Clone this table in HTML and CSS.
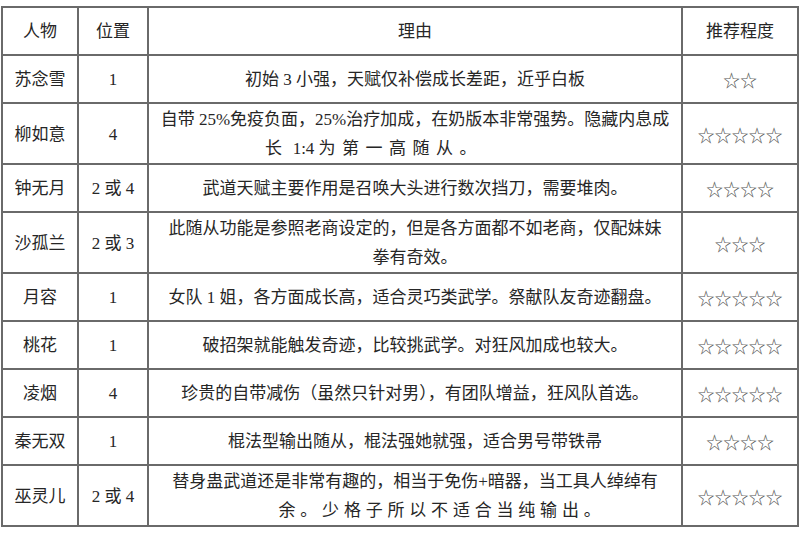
FILE: index.html
```html
<!DOCTYPE html>
<html lang="zh-CN">
<head>
<meta charset="utf-8">
<title>随从推荐</title>
<link rel="stylesheet" href="styles.css">
</head>
<body>
<table class="grid">
  <colgroup>
    <col class="c-name">
    <col class="c-pos">
    <col class="c-why">
    <col class="c-star">
  </colgroup>
  <thead>
    <tr class="row">
      <th>人物</th>
      <th>位置</th>
      <th>理由</th>
      <th>推荐程度</th>
    </tr>
  </thead>
  <tbody>
    <tr class="row">
      <td>苏念雪</td>
      <td>1</td>
      <td class="why">初始 3 小强，天赋仅补偿成长差距，近乎白板</td>
      <td class="stars">☆☆</td>
    </tr>
    <tr class="row">
      <td>柳如意</td>
      <td>4</td>
      <td class="why">自带 25%免疫负面，25%治疗加成，在奶版本非常强势。隐藏内息成<br><span class="spread spread-left">长<span class="plain"> 1:4 </span>为第一高随从。</span></td>
      <td class="stars">☆☆☆☆☆</td>
    </tr>
    <tr class="row">
      <td>钟无月</td>
      <td>2 或 4</td>
      <td class="why">武道天赋主要作用是召唤大头进行数次挡刀，需要堆肉。</td>
      <td class="stars">☆☆☆☆</td>
    </tr>
    <tr class="row">
      <td>沙孤兰</td>
      <td>2 或 3</td>
      <td class="why">此随从功能是参照老商设定的，但是各方面都不如老商，仅配妹妹<br>拳有奇效。</td>
      <td class="stars">☆☆☆</td>
    </tr>
    <tr class="row">
      <td>月容</td>
      <td>1</td>
      <td class="why">女队 1 姐，各方面成长高，适合灵巧类武学。祭献队友奇迹翻盘。</td>
      <td class="stars">☆☆☆☆☆</td>
    </tr>
    <tr class="row">
      <td>桃花</td>
      <td>1</td>
      <td class="why">破招架就能触发奇迹，比较挑武学。对狂风加成也较大。</td>
      <td class="stars">☆☆☆☆☆</td>
    </tr>
    <tr class="row">
      <td>凌烟</td>
      <td>4</td>
      <td class="why">珍贵的自带减伤（虽然只针对男），有团队增益，狂风队首选。</td>
      <td class="stars">☆☆☆☆☆</td>
    </tr>
    <tr class="row">
      <td>秦无双</td>
      <td>1</td>
      <td class="why">棍法型输出随从，棍法强她就强，适合男号带铁帚</td>
      <td class="stars">☆☆☆☆</td>
    </tr>
    <tr class="row">
      <td>巫灵儿</td>
      <td>2 或 4</td>
      <td class="why">替身蛊武道还是非常有趣的，相当于免伤+暗器，当工具人绰绰有<br><span class="spread spread-right">余。少格子所以不适合当纯输出。</span></td>
      <td class="stars">☆☆☆☆☆</td>
    </tr>
  </tbody>
</table>
</body>
</html>
```

FILE: styles.css
```css
html, body {
  margin: 0;
  padding: 0;
  background: #ffffff;
}

body {
  padding: 6px 0 0 1px;
}

.grid {
  border-collapse: collapse;
  table-layout: fixed;
  width: 796px;
  font-family: "Liberation Serif", "Noto Sans CJK SC", serif;
  font-size: 17px;
  color: #262626;
}

.c-name { width: 76px; }
.c-pos { width: 70px; }
.c-why { width: 534px; }
.c-star { width: 116px; }

.grid th,
.grid td {
  border: 2px solid #6a6a6a;
  padding: 1px 6px 0;
  line-height: 29px;
  text-align: center;
  vertical-align: middle;
  font-weight: normal;
  white-space: nowrap;
}

.row {
  height: 48px;
}

.spread {
  display: inline-block;
  letter-spacing: 4.8px;
}

.plain {
  letter-spacing: 0;
}

.spread-left {
  letter-spacing: 6.5px;
  padding-right: 82px;
}

.spread-right {
  padding-left: 54px;
}

.stars {
  font-family: "Noto Sans CJK SC", sans-serif;
  color: #555555;
  letter-spacing: 0;
}
```
